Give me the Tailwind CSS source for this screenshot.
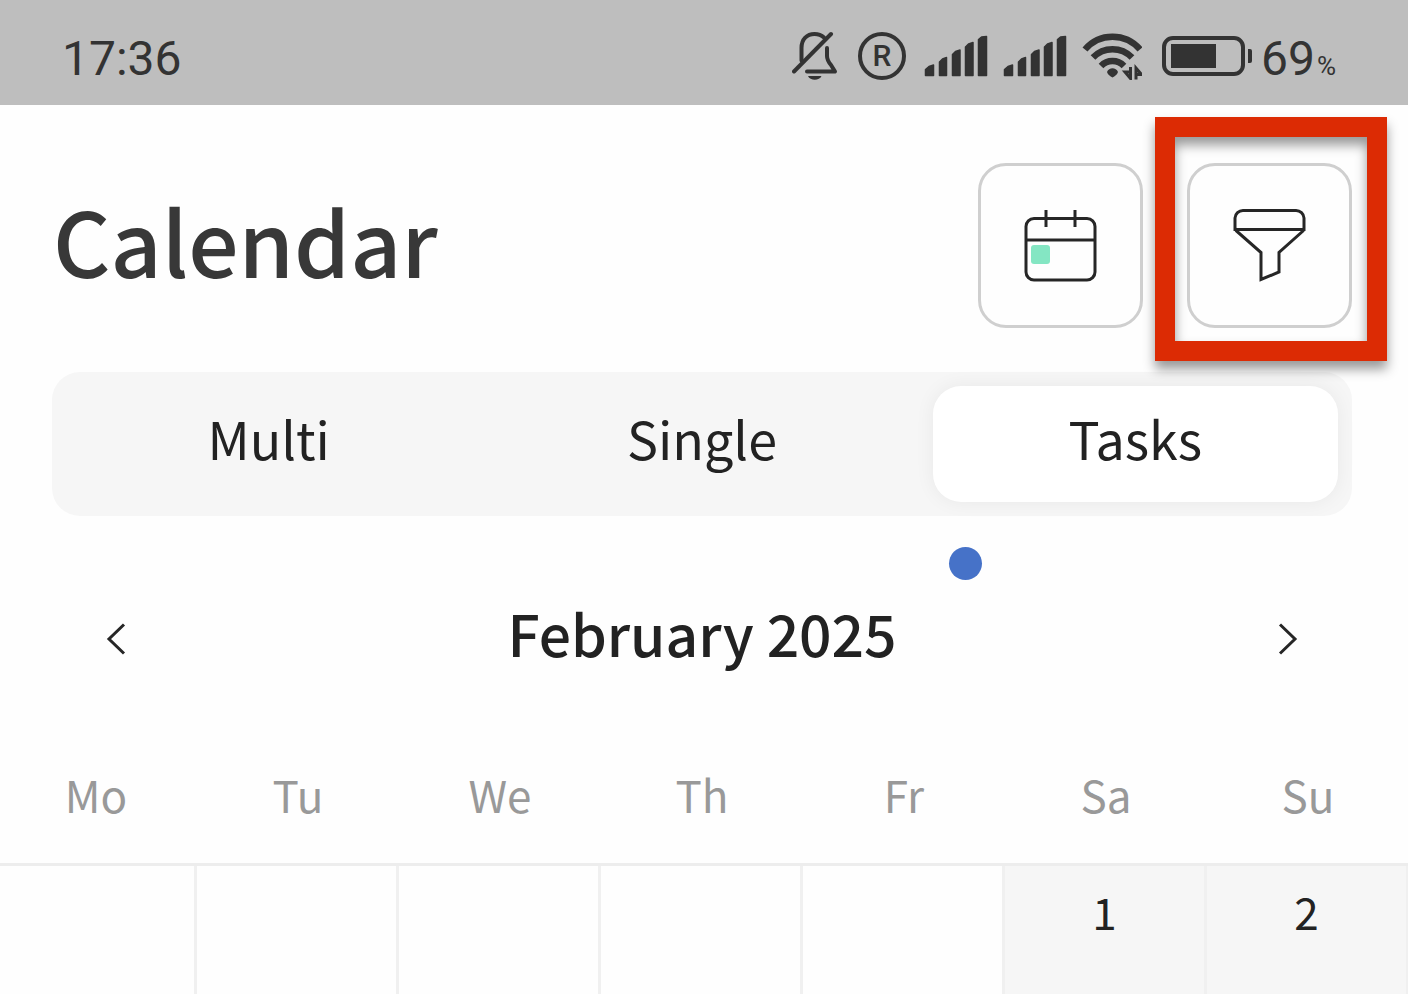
<!DOCTYPE html>
<html lang="en">
<head>
    <meta charset="UTF-8">
    <meta name="viewport" content="width=device-width, initial-scale=1.0">
    <title>Calendar</title>
    <script src="https://cdn.jsdelivr.net/npm/@tailwindcss/browser@4"></script>
</head>
<body class="bg-[#fefefe] text-[#222] font-['Noto_Sans_CJK_SC',sans-serif] min-h-screen overflow-hidden">
    <!-- Status bar -->
    <div class="bg-[#bebebe] h-[105px] pt-1.5 pl-[62px] pr-[72px] flex items-center justify-between text-[#333] font-[Roboto,sans-serif] text-[48px]">
        <time class="pt-1.5">17:36</time>
        <div class="flex items-center">
            <svg class="w-[46px] h-[50px]" viewBox="0 0 46 50" fill="none" stroke="currentColor" stroke-width="4" stroke-linecap="round" stroke-linejoin="round">
                <path d="M2 40.500 39 3"/>
                <path d="M9.500 29.500V17C9.500 8 15 3 22.500 3c4 0 7 1.200 9.500 3.500"/>
                <path d="M35 17v8c0 3 1.500 6 4 9l4 6.500H15"/>
                <path d="M16 45h13.500c-2 5-11.500 5-13.500 0z" fill="currentColor" stroke="none"/>
            </svg>
            <span class="ml-5 size-12 rounded-full border-4 border-[#333] flex items-center justify-center text-[30px] leading-none font-medium">R</span>
            <svg class="ml-[18px] w-16 h-[42px]" viewBox="0 0 64 42" fill="currentColor" stroke="currentColor" stroke-width="1.500" stroke-linejoin="round">
                <path d="M1.500 34.500 5 31.500 9.500 30v10.500h-8zM15.500 27l3-3 4-1.500v18h-7zM28.500 19.500l3-3 4.500-1.500v25.500h-7.500zM41.500 12l3-3 4.500-1.500v33h-7.500zM54.500 4.500l3-2.500 5-.5v39h-8z"/>
            </svg>
            <svg class="ml-[15px] w-16 h-[42px]" viewBox="0 0 64 42" fill="currentColor" stroke="currentColor" stroke-width="1.500" stroke-linejoin="round">
                <path d="M1.500 34.500 5 31.500 9.500 30v10.500h-8zM15.500 27l3-3 4-1.500v18h-7zM28.500 19.500l3-3 4.500-1.500v25.500h-7.500zM41.500 12l3-3 4.500-1.500v33h-7.500zM54.500 4.500l3-2.500 5-.5v39h-8z"/>
            </svg>
            <svg class="ml-[15px] w-[60px] h-12" viewBox="0 0 60 48" fill="none" stroke="currentColor" stroke-width="6.500">
                <path d="M3 17.500a36 36 0 0 1 55 0M11 25.500a27 27 0 0 1 39 0M19 34a16 16 0 0 1 23 0"/>
                <path d="M25 40c2-5 9-5 11 0-1 3-3 4-5.500 5.500C28 44 26 43 25 40z" fill="currentColor" stroke="none"/>
                <path d="M48.500 35v11.500L43 40h4M54 47.500V36l5.500 6.500h-4" stroke-width="3"/>
            </svg>
            <svg class="ml-5 w-[91px] h-10" viewBox="0 0 91 40" fill="currentColor">
                <rect x="2" y="2" width="79" height="36" rx="9" fill="none" stroke="currentColor" stroke-width="4"/>
                <rect x="9" y="8" width="45" height="24"/>
                <path d="M86 13h2q2 0 2 2v10q0 2-2 2h-2z"/>
            </svg>
            <span class="ml-2 pt-1.5 flex items-baseline">69<small class="ml-0.5 text-[26px]">%</small></span>
        </div>
    </div>

    <!-- Title and actions -->
    <header class="pt-[58px] pl-[53px] pr-[56px] flex items-start justify-between">
        <h1 class="text-[89px] leading-[154px] font-medium text-[#383838]">Calendar</h1>
        <div class="flex gap-11">
            <button aria-label="Pick a date" class="size-[165px] rounded-[28px] border-3 border-[#cfcfcf] flex items-center justify-center">
                <svg class="size-[76px]" viewBox="1 0 76 76" fill="none" stroke="#262626" stroke-width="3">
                    <rect x="9" y="37" width="19" height="19" rx="3" fill="#84e6c3" stroke="none"/>
                    <rect x="4" y="10.500" width="69" height="61.500" rx="8"/>
                    <path d="M4 32h69M24 2v17M53 2v17"/>
                </svg>
            </button>
            <div class="relative">
                <button aria-label="Filter" class="size-[165px] rounded-[28px] border-3 border-[#cfcfcf] flex items-center justify-center">
                    <svg class="size-[76px]" viewBox="1 0 76 76" fill="none" stroke="#262626" stroke-width="3">
                        <path d="M4 21.500V10a8 8 0 0 1 8-7.500h53a8 8 0 0 1 8 7.500v11.500zM4 20l1.500 3 24.500 21.500V71.500l18-7.500V44.500L72 23l1-3"/>
                    </svg>
                </button>
                <div class="absolute -top-[46px] -bottom-[33px] -left-8 -right-[35px] z-10 border-20 border-[#dc2b04] drop-shadow-[0_8px_6px_rgba(0,0,0,0.4)] pointer-events-none"></div>
            </div>
        </div>
    </header>

    <!-- View switch -->
    <nav class="mt-11 ml-[52px] mr-[56px] grid grid-cols-3 rounded-[28px] bg-[#f6f6f6] text-[52px]">
        <div class="p-3.5"><button class="w-full h-[116px] pb-3 rounded-[28px]">Multi</button></div>
        <div class="p-3.5"><button class="w-full h-[116px] pb-3 rounded-[28px]">Single</button></div>
        <div class="p-3.5 relative">
            <button class="w-full h-[116px] pb-3 rounded-[28px] bg-white shadow-[0_0_20px_rgba(0,0,0,0.06)]">Tasks</button>
            <span class="absolute left-[30px] top-[175px] size-[33px] rounded-full bg-[#4672c8]"></span>
        </div>
    </nav>

    <!-- Month -->
    <div class="mt-[75px] ml-[52px] mr-[56px] h-24 flex items-center justify-between">
        <button aria-label="Previous month" class="w-32 h-24 flex items-center justify-center">
            <svg class="w-5 h-8" viewBox="0 0 20 32" fill="none" stroke="#262626" stroke-width="3"><path d="M18 1.500 3 16l15 14.500"/></svg>
        </button>
        <h2 class="pb-3 text-[57px] font-medium">February 2025</h2>
        <button aria-label="Next month" class="w-32 h-24 flex items-center justify-center">
            <svg class="w-5 h-8" viewBox="0 0 20 32" fill="none" stroke="#262626" stroke-width="3"><path d="M2 1.500 17 16 2 30.500"/></svg>
        </button>
    </div>

    <!-- Days -->
    <table class="mt-9 -ml-[5px] w-[calc(100%+6px)] table-fixed border-separate border-spacing-0 text-[44px]">
        <thead>
            <tr class="h-[143px] text-[#999] *:border-b-3 *:border-[#ededed] *:font-normal *:p-0 *:pt-0.5">
                <th>Mo</th>
                <th>Tu</th>
                <th>We</th>
                <th>Th</th>
                <th>Fr</th>
                <th>Sa</th>
                <th>Su</th>
            </tr>
        </thead>
        <tbody>
            <tr class="h-[130px] text-center align-top *:border-r-3 *:border-[#f0f0f0] *:p-0 *:pt-3">
                <td></td>
                <td></td>
                <td></td>
                <td></td>
                <td></td>
                <td class="bg-[#f6f6f6]">1</td>
                <td class="bg-[#f6f6f6]">2</td>
            </tr>
        </tbody>
    </table>
</body>
</html>
